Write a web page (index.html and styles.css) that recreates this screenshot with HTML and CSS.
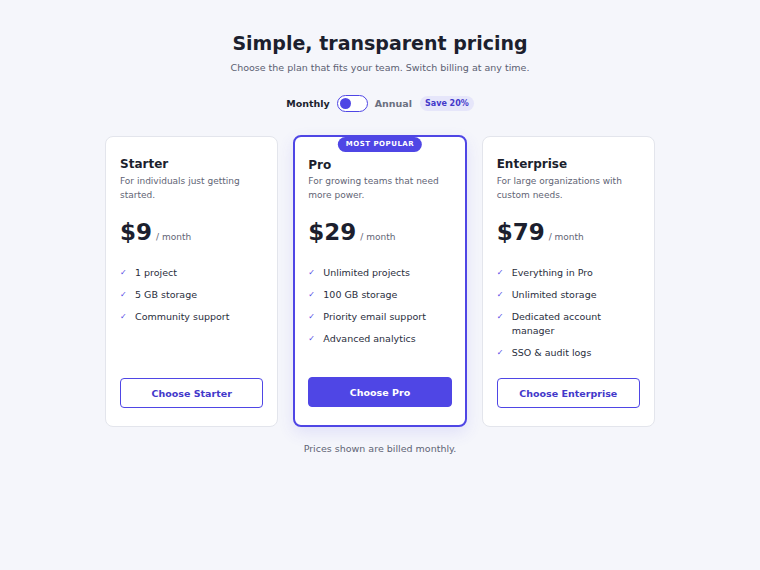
FILE: index.html
```html
<!DOCTYPE html>
<html lang="en">
<head>
    <meta charset="UTF-8">
    <meta name="viewport" content="width=device-width, initial-scale=1.0">
    <title>Pricing</title>
    <link rel="stylesheet" href="styles.css">
</head>
<body>
    <div class="page">
        <h1>Simple, transparent pricing</h1>
        <p class="lead">Choose the plan that fits your team. Switch billing at any time.</p>

        <div class="billing">
            <span class="billing-label active">Monthly</span>
            <span class="switch"><span class="knob"></span></span>
            <span class="billing-label">Annual</span>
            <span class="save">Save 20%</span>
        </div>

        <div class="plans">
            <div class="plan">
                <h3>Starter</h3>
                <p class="desc">For individuals just getting started.</p>
                <div class="price"><span class="amount">$9</span><span class="per">/ month</span></div>
                <ul class="features">
                    <li><span class="check">✓</span>1 project</li>
                    <li><span class="check">✓</span>5 GB storage</li>
                    <li><span class="check">✓</span>Community support</li>
                </ul>
                <button class="btn">Choose Starter</button>
            </div>

            <div class="plan featured">
                <span class="badge">Most popular</span>
                <h3>Pro</h3>
                <p class="desc">For growing teams that need more power.</p>
                <div class="price"><span class="amount">$29</span><span class="per">/ month</span></div>
                <ul class="features">
                    <li><span class="check">✓</span>Unlimited projects</li>
                    <li><span class="check">✓</span>100 GB storage</li>
                    <li><span class="check">✓</span>Priority email support</li>
                    <li><span class="check">✓</span>Advanced analytics</li>
                </ul>
                <button class="btn btn-solid">Choose Pro</button>
            </div>

            <div class="plan">
                <h3>Enterprise</h3>
                <p class="desc">For large organizations with custom needs.</p>
                <div class="price"><span class="amount">$79</span><span class="per">/ month</span></div>
                <ul class="features">
                    <li><span class="check">✓</span>Everything in Pro</li>
                    <li><span class="check">✓</span>Unlimited storage</li>
                    <li><span class="check">✓</span>Dedicated account manager</li>
                    <li><span class="check">✓</span>SSO &amp; audit logs</li>
                </ul>
                <button class="btn">Choose Enterprise</button>
            </div>
        </div>

        <p class="note">Prices shown are billed monthly.</p>
    </div>
</body>
</html>
```

FILE: styles.css
```css
body { margin: 0; background: #f5f6fb; font-family: "DejaVu Sans", sans-serif; color: #1c1f2e; }
.page { width: 550px; margin: 0 auto; padding-top: 32px; text-align: center; }
h1 { margin: 0; font-size: 19px; line-height: 23px; font-weight: bold; color: #1c1f2e; }
.lead { margin: 5px 0 0; font-size: 9.5px; line-height: 16px; color: #5b6072; }

.billing { display: flex; justify-content: center; align-items: center; margin-top: 18px; height: 18px; }
.billing-label { font-size: 9.5px; font-weight: bold; color: #6b7080; }
.billing-label.active { color: #1c1f2e; }
.switch { display: flex; align-items: center; box-sizing: border-box; width: 31px; height: 17px; margin: 0 7px; padding: 0 2px; border: 1.5px solid #4f46e5; border-radius: 9px; background: #fff; }
.knob { width: 11px; height: 11px; border-radius: 50%; background: #4f46e5; }
.save { margin-left: 8px; padding: 2px 5px; border-radius: 8px; background: #e6e6fa; color: #4338ca; font-size: 8px; font-weight: bold; line-height: 11px; }

.plans { display: flex; gap: 15px; margin-top: 24px; text-align: left; }
.plan { position: relative; flex: 1; display: flex; flex-direction: column; padding: 19px 14px 18px; background: #fff; border: 1px solid #e3e5ec; border-radius: 8px; }
.plan.featured { border: 2px solid #4f46e5; padding: 19px 13px 18px; margin-top: -1px; box-shadow: 0 6px 16px rgba(79, 70, 229, 0.12); }
.badge { position: absolute; top: 0; left: 50%; transform: translateX(-50%); padding: 2px 8px; border-radius: 8px; background: #4f46e5; color: #fff; font-size: 7px; font-weight: bold; letter-spacing: 0.5px; text-transform: uppercase; line-height: 11px; white-space: nowrap; }
.featured h3 { margin-top: 1px; }
.featured .desc { margin-top: 0; }
h3 { margin: 0; font-size: 12px; line-height: 17px; }
.desc { margin: 1px 0 0; font-size: 9px; line-height: 14px; color: #5f6475; }
.price { display: flex; align-items: baseline; margin-top: 16px; }
.amount { font-size: 23px; line-height: 29px; font-weight: bold; }
.per { margin-left: 4px; font-size: 9px; color: #5f6475; }
.features { list-style: none; margin: 19px 0 18px; padding: 0; display: flex; flex-direction: column; gap: 8px; }
.features li { display: flex; font-size: 9.5px; line-height: 14px; color: #2a2e3d; }
.check { flex: none; width: 15px; font-size: 8px; color: #4f46e5; }
.btn { margin-top: auto; height: 30px; border: 1.5px solid #4f46e5; border-radius: 4px; background: #fff; color: #4338ca; font-family: inherit; font-size: 9.5px; font-weight: bold; cursor: pointer; }
.btn-solid { background: #4f46e5; color: #fff; }
.note { margin: 15px 0 0; font-size: 9.5px; line-height: 14px; color: #5f6475; }
```
